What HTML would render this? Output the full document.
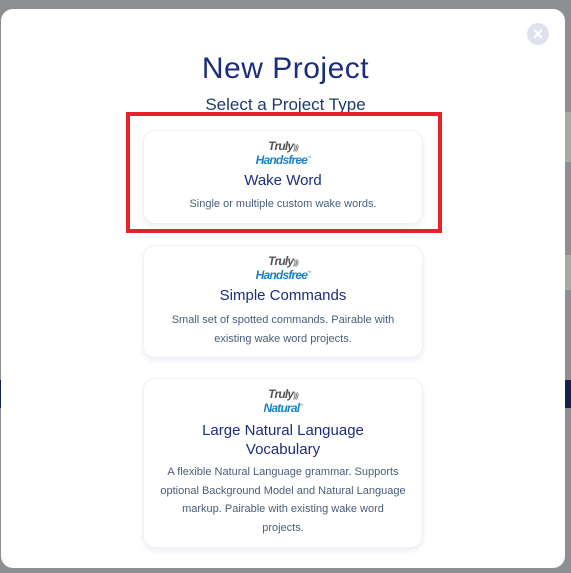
<!DOCTYPE html>
<html><head><style>
*{margin:0;padding:0;box-sizing:border-box}
body{width:571px;height:573px;background:#8e8f92;position:relative;overflow:hidden;font-family:"Liberation Sans",sans-serif}
.bg1{position:absolute;left:0;top:380px;width:571px;height:28px;background:#14224f}
.bg2{position:absolute;left:560px;top:112px;width:11px;height:50px;background:#a3aea0}
.bg3{position:absolute;left:560px;top:255px;width:11px;height:35px;background:#a3aea0}
.modal{position:absolute;left:1px;top:9px;width:564px;height:559px;background:#fff;border-radius:12px}
.close{position:absolute;left:527px;top:23px;width:22px;height:22px;border-radius:50%;background:#dfe2ee;color:#fff;font-size:18px;font-weight:bold;text-align:center;line-height:22px}
h1{position:absolute;left:0;width:571px;top:52px;text-align:center;font-size:30px;font-weight:normal;color:#1b2d7c;letter-spacing:.5px}
h2{position:absolute;left:0;width:571px;top:95px;text-align:center;font-size:17px;font-weight:normal;color:#1f3a6c}
.card{position:absolute;left:143px;width:280px;background:#fff;border:1px solid #eef0f6;border-radius:12px;box-shadow:0 3px 6px rgba(40,60,140,.08);text-align:center}
.logo{margin:10px auto 0;height:24px;line-height:11px}
.logo .a{font-size:12px;font-style:italic;font-weight:bold;color:#555;letter-spacing:-.8px;line-height:11px;height:11px}
.logo .b{font-size:12px;font-style:italic;font-weight:bold;color:#1b82c8;letter-spacing:-.8px;line-height:11px;height:11px}
.t{font-size:15px;color:#1b2d7c;margin-top:6px;line-height:19px}
.d{font-size:11px;color:#4a5d7a;line-height:18.5px;margin-top:6px;padding:0 12px}
.red{position:absolute;left:126px;top:112px;width:316px;height:121px;border:4px solid #e8202a}
</style></head><body>
<div class="bg1"></div><div class="bg2"></div><div class="bg3"></div>
<div class="modal"></div>
<div class="close">×</div>
<h1>New Project</h1>
<h2>Select a Project Type</h2>
<div class="card" style="top:130px;height:94px">
 <div class="logo"><div class="a">Truly<span style="color:#777;font-size:7px">)))</span></div><div class="b">Handsfree<sup style="font-size:4px">™</sup></div></div>
 <div class="t">Wake Word</div>
 <div class="d" style="margin-top:5px">Single or multiple custom wake words.</div>
</div>
<div class="card" style="top:245px;height:113px">
 <div class="logo"><div class="a">Truly<span style="color:#777;font-size:7px">)))</span></div><div class="b">Handsfree<sup style="font-size:4px">™</sup></div></div>
 <div class="t">Simple Commands</div>
 <div class="d">Small set of spotted commands. Pairable with existing wake word projects.</div>
</div>
<div class="card" style="top:378px;height:170px">
 <div class="logo"><div class="a">Truly<span style="color:#777;font-size:7px">)))</span></div><div class="b">Natural<sup style="font-size:4px">™</sup></div></div>
 <div class="t" style="margin-top:8px">Large Natural Language<br>Vocabulary</div>
 <div class="d" style="margin-top:4px;padding:0 16px">A flexible Natural Language grammar. Supports optional Background Model and Natural Language markup. Pairable with existing wake word projects.</div>
</div>
<div class="red"></div>
</body></html>
